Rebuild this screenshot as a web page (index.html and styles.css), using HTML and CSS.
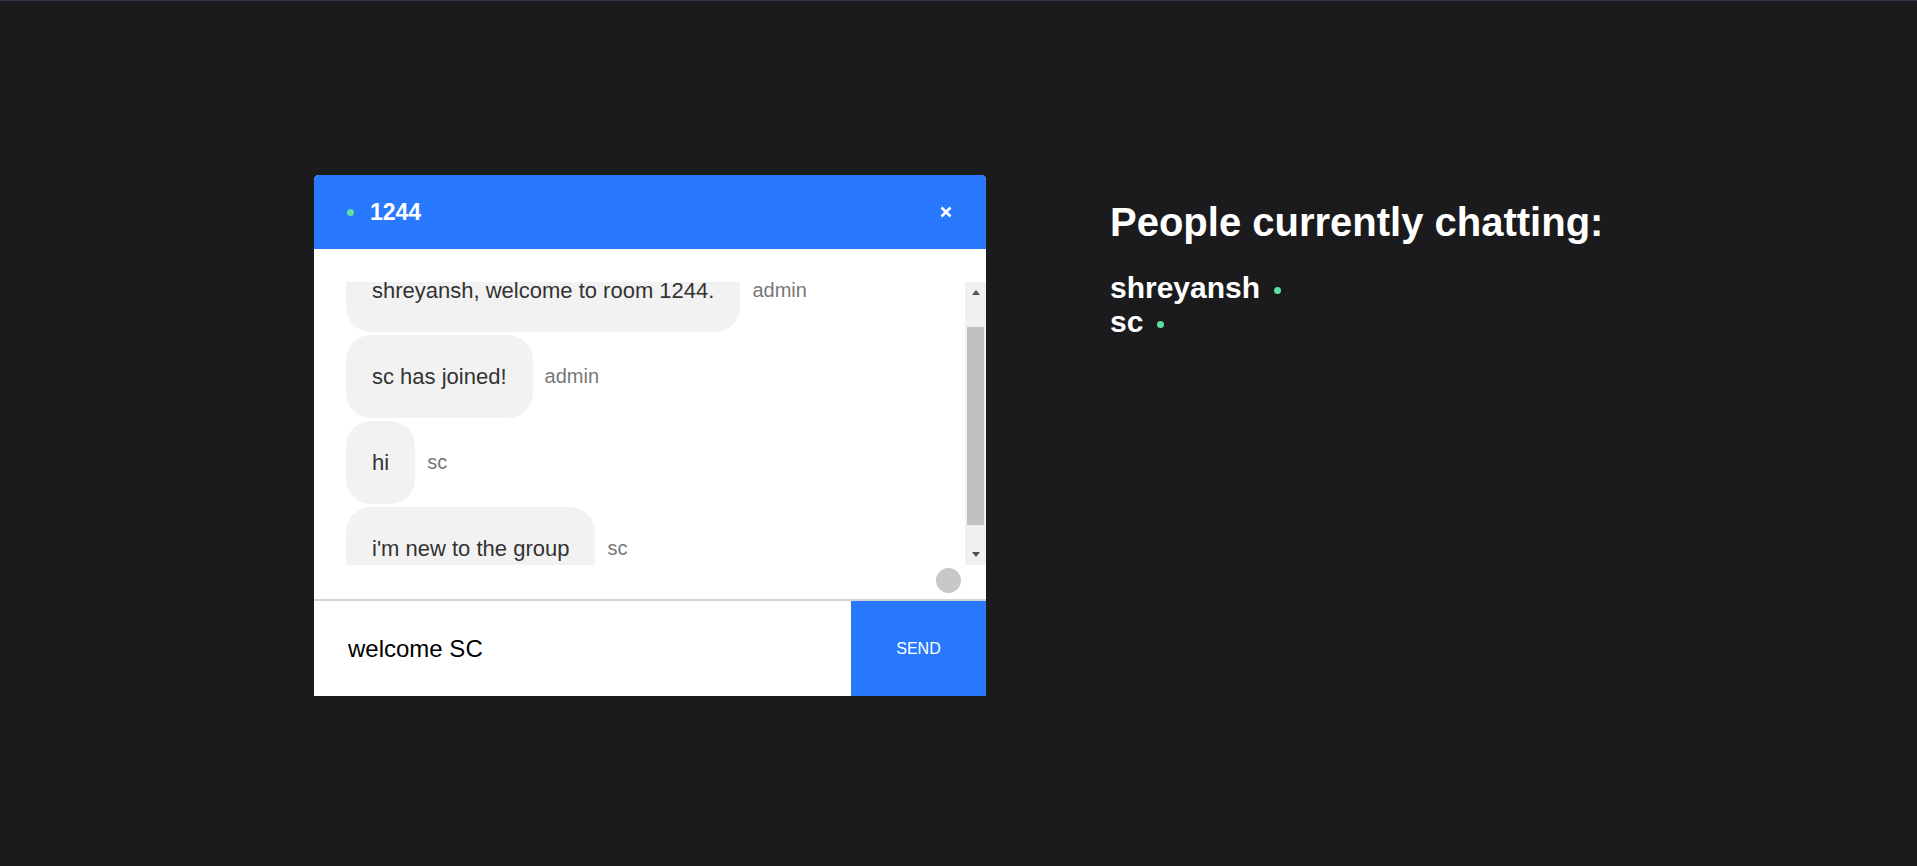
FILE: index.html
```html
<!DOCTYPE html>
<html lang="en">
<head>
<meta charset="utf-8">
<title>Chat</title>
<link rel="stylesheet" href="styles.css">
</head>
<body>
<div class="page">
  <section class="chat">
    <header class="chat-header">
      <div class="room">
        <span class="online-dot"></span>
        <span class="room-name">1244</span>
      </div>
      <button class="close-btn" aria-label="close">
        <svg width="12" height="12" viewBox="0 0 12 12"><path d="M1.5 1.5 L10.5 10.5 M10.5 1.5 L1.5 10.5" stroke="#fff" stroke-width="2.6" fill="none"/></svg>
      </button>
    </header>
    <div class="chat-body">
      <div class="scroll-row">
        <div class="viewport">
          <div class="messages">
            <div class="msg"><div class="bubble">shreyansh, welcome to room 1244.</div><span class="sender">admin</span></div>
            <div class="msg"><div class="bubble">sc has joined!</div><span class="sender">admin</span></div>
            <div class="msg"><div class="bubble">hi</div><span class="sender">sc</span></div>
            <div class="msg"><div class="bubble">i'm new to the group</div><span class="sender">sc</span></div>
          </div>
        </div>
        <div class="scrollbar">
          <div class="sb-btn"><span class="tri-up"></span></div>
          <div class="sb-track"><div class="sb-thumb"></div></div>
          <div class="sb-btn"><span class="tri-down"></span></div>
        </div>
      </div>
      <div class="typing-row"><span class="typing-dot"></span></div>
    </div>
    <form class="composer">
      <input class="composer-input" type="text" value="welcome SC">
      <button class="send-btn" type="button">SEND</button>
    </form>
  </section>
  <aside class="people">
    <h1 class="people-title">People currently chatting:</h1>
    <div class="people-list">
      <div class="person">shreyansh<span class="person-dot"></span></div>
      <div class="person">sc<span class="person-dot"></span></div>
    </div>
  </aside>
</div>
</body>
</html>
```

FILE: styles.css
```css
* { box-sizing: border-box; }

html, body {
  margin: 0;
  padding: 0;
}

body {
  background: #1b1b1d;
  border-top: 1px solid #3a3348;
  font-family: "Liberation Sans", Arial, sans-serif;
}

.page {
  display: flex;
  align-items: flex-start;
  gap: 124px;
  padding: 174px 0 0 314px;
}

/* chat card */
.chat {
  width: 672px;
  display: flex;
  flex-direction: column;
  background: #fff;
  border-radius: 5px 5px 0 0;
  overflow: hidden;
}

.chat-header {
  height: 74px;
  background: #2979ff;
  display: flex;
  align-items: center;
  justify-content: space-between;
  padding: 0 34px 0 33px;
}

.room {
  display: flex;
  align-items: center;
  gap: 16px;
}

.online-dot {
  width: 7px;
  height: 7px;
  border-radius: 50%;
  background: #5ddfa2;
}

.room-name {
  color: #fff;
  font-weight: 700;
  font-size: 23px;
}

.close-btn {
  border: none;
  background: none;
  padding: 0;
  width: 12px;
  height: 12px;
  display: flex;
}

.chat-body {
  height: 350px;
  padding-top: 33px;
  display: flex;
  flex-direction: column;
}

.scroll-row {
  height: 283px;
  display: flex;
}

.viewport {
  flex: 1;
  overflow: hidden;
  padding-left: 32px;
}

.messages {
  margin-top: -33px;
  display: flex;
  flex-direction: column;
  gap: 3px;
}

.msg {
  display: flex;
  align-items: center;
  gap: 12px;
}

.bubble {
  background: #f2f2f2;
  color: #333;
  font-size: 22px;
  line-height: 25px;
  padding: 29px 26px;
  border-radius: 25px;
}

.sender {
  color: #777;
  font-size: 20px;
}

/* fake scrollbar */
.scrollbar {
  width: 21px;
  display: flex;
  flex-direction: column;
  background: #f0f0f0;
}

.sb-btn {
  height: 21px;
  display: flex;
  align-items: center;
  justify-content: center;
}

.tri-up {
  width: 0;
  height: 0;
  border-left: 4.5px solid transparent;
  border-right: 4.5px solid transparent;
  border-bottom: 5px solid #505050;
}

.tri-down {
  width: 0;
  height: 0;
  border-left: 4.5px solid transparent;
  border-right: 4.5px solid transparent;
  border-top: 5px solid #505050;
}

.sb-track {
  flex: 1;
  padding: 0 2px;
}

.sb-thumb {
  margin-top: 24px;
  height: 198px;
  background: #c1c1c1;
}

.typing-row {
  display: flex;
  justify-content: flex-end;
  padding: 3px 25px 6px 0;
}

.typing-dot {
  width: 25px;
  height: 25px;
  border-radius: 50%;
  background: #c8c8c8;
}

/* composer */
.composer {
  margin: 0;
  height: 97px;
  display: flex;
  border-top: 2px solid #d3d3d3;
}

.composer-input {
  flex: 1;
  min-width: 0;
  border: none;
  outline: none;
  padding: 0 0 0 34px;
  font-family: "Liberation Sans", Arial, sans-serif;
  font-size: 24px;
  color: #000;
  background: #fff;
}

.send-btn {
  width: 135px;
  border: none;
  background: #2979ff;
  color: #fff;
  font-family: "Liberation Sans", Arial, sans-serif;
  font-size: 16px;
  padding: 0;
}

/* people panel */
.people {
  padding-top: 25px;
  color: #fff;
}

.people-title {
  margin: 0;
  font-size: 40px;
  font-weight: 700;
}

.people-list {
  margin-top: 26px;
}

.person {
  font-size: 30px;
  font-weight: 700;
}

.person-dot {
  display: inline-block;
  width: 7px;
  height: 7px;
  margin-left: 14px;
  border-radius: 50%;
  background: #5ddfa2;
  vertical-align: middle;
}
```
